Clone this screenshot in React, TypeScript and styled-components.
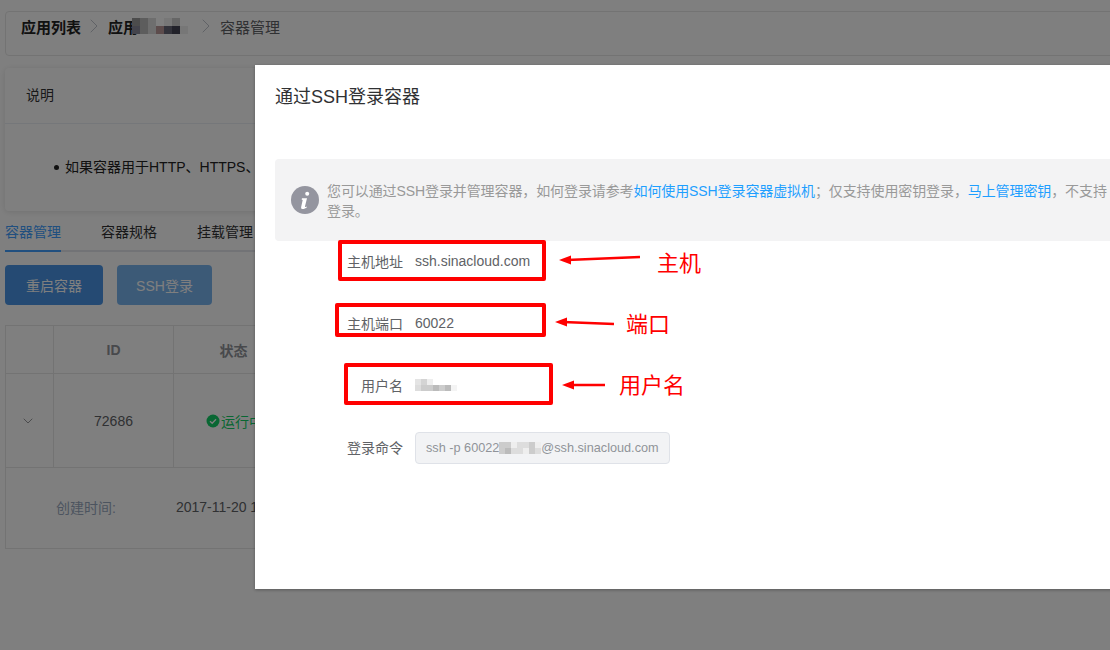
import React from "react";
import styled, { createGlobalStyle } from "styled-components";
import { ChevronDown, ChevronRight } from "lucide-react";

const GlobalStyle = createGlobalStyle`
  html, body {
    margin: 0;
    padding: 0;
    background: #fff;
  }
  * {
    box-sizing: border-box;
  }
`;

const Screen = styled.div`
  position: relative;
  width: 1110px;
  height: 650px;
  overflow: hidden;
  font-family: "Liberation Sans", "Noto Sans CJK SC", sans-serif;
  font-size: 14px;
  color: #333;
`;

const Page = styled.div`
  display: flex;
  flex-direction: column;
  width: 1400px;
  padding: 11px 0 0 5px;
`;

const Breadcrumb = styled.div`
  height: 45px;
  padding: 3px 0 0 15px;
  border: 1px solid #e6e6e6;
  border-radius: 4px;
  color: #666;
`;

const Trail = styled.div`
  display: flex;
  align-items: center;
  height: 22px;
  font-size: 15px;
`;

const Crumb = styled.span<{ $strong?: boolean }>`
  font-weight: ${(p) => (p.$strong ? 700 : 400)};
  color: ${(p) => (p.$strong ? "#222" : "#606266")};
`;

const Sep = styled(ChevronRight)`
  width: 24px;
  height: 24px;
  margin: 0 2px 0 1px;
  color: #c0c4cc;
  flex: none;
`;

const Mosaic = styled.svg`
  display: inline-block;
  flex: none;
  vertical-align: middle;
`;

const CrumbBlur = styled.span`
  display: flex;
  margin: 0 5px 0 -6px;
`;

const Card = styled.div`
  margin-top: 12px;
  height: 143px;
  background: #fff;
  border-radius: 4px;
  box-shadow: 0 1px 6px rgba(0, 0, 0, 0.12);
`;

const CardHead = styled.div`
  height: 56px;
  padding: 0 21px 3px;
  display: flex;
  align-items: center;
  font-size: 14px;
  color: #333;
  border-bottom: 1px solid #ebeef5;
`;

const CardBody = styled.ul`
  margin: 0;
  padding: 35px 0 0 49px;
  list-style: none;
  font-size: 14px;
  line-height: 16px;
  color: #222;
`;

const CardItem = styled.li`
  display: flex;
  align-items: center;
  white-space: nowrap;

  &::before {
    content: "";
    width: 5px;
    height: 5px;
    margin-right: 6px;
    border-radius: 50%;
    background: #222;
  }
`;

const Tabs = styled.div`
  display: flex;
  gap: 40px;
  height: 41px;
  border-bottom: 2px solid #e4e7ed;
  width: 1000px;
`;

const Tab = styled.div<{ $active?: boolean }>`
  height: 41px;
  line-height: 42px;
  font-size: 14px;
  color: ${(p) => (p.$active ? "#409eff" : "#303133")};
  border-bottom: 2px solid ${(p) => (p.$active ? "#409eff" : "transparent")};
`;

const Actions = styled.div`
  display: flex;
  gap: 14px;
  margin-top: 13px;
`;

const Button = styled.button<{ $muted?: boolean }>`
  height: 40px;
  width: ${(p) => (p.$muted ? "95px" : "98px")};
  padding: 0;
  border: 0;
  border-radius: 4px;
  font: inherit;
  font-size: 14px;
  color: #fff;
  background: ${(p) => (p.$muted ? "#79b4ee" : "#4a95e6")};
`;

const Table = styled.div`
  margin-top: 20px;
  width: 1000px;
  border: 1px solid #e6e6e6;
  height: 224px;
`;

const TableRow = styled.div<{ $h: number }>`
  display: grid;
  grid-template-columns: 48px 120px 120px 1fr;
  height: ${(p) => p.$h}px;
  border-bottom: 1px solid #e6e6e6;
`;

const Cell = styled.div<{ $head?: boolean }>`
  display: flex;
  align-items: center;
  justify-content: center;
  border-right: 1px solid #e6e6e6;
  font-size: 14px;
  font-weight: ${(p) => (p.$head ? 700 : 400)};
  color: ${(p) => (p.$head ? "#909399" : "#606266")};
`;

const ExpandCell = styled(Cell)`
  padding-right: 4px;
`;

const StatusCell = styled(Cell)`
  justify-content: flex-start;
  padding-left: 32px;
  color: #13ce66;
  gap: 1px;
  white-space: nowrap;
`;

const Expanded = styled.div`
  display: flex;
  align-items: center;
  height: 77px;
  padding-left: 50px;
  gap: 60px;
  color: #606266;
`;

const ExpandedLabel = styled.span`
  color: #99a9bf;
`;

const Backdrop = styled.div`
  position: absolute;
  inset: 0;
  background: rgba(0, 0, 0, 0.5);
`;

const Dialog = styled.div`
  position: absolute;
  left: 255px;
  top: 65px;
  width: 900px;
  height: 524px;
  background: #fff;
  box-shadow: 0 1px 3px rgba(0, 0, 0, 0.3);
  padding: 20px;
`;

const DialogTitle = styled.div`
  font-size: 18px;
  line-height: 24px;
  color: #303133;
`;

const Alert = styled.div`
  display: flex;
  align-items: center;
  gap: 8px;
  margin-top: 50px;
  height: 82px;
  padding: 0 16px;
  background: #f3f3f4;
  border-radius: 4px;
`;

const AlertIcon = styled.svg`
  flex: none;
  width: 28px;
  height: 28px;
`;

const AlertText = styled.div`
  padding-top: 1px;
  font-size: 14px;
  line-height: 20px;
  letter-spacing: -0.1px;
  color: #999;
  white-space: nowrap;
`;

const AlertLink = styled.span`
  color: #1e9fff;
`;

const Form = styled.div`
  display: flex;
  flex-direction: column;
  gap: 22px;
`;

const FormRow = styled.div`
  display: flex;
  align-items: center;
  height: 40px;
  font-size: 14px;
  color: #606266;
`;

const Label = styled.div`
  width: 128px;
  flex: none;
  padding-bottom: 1px;
  text-align: right;
`;

const Value = styled.div`
  display: flex;
  margin-left: 12px;
  white-space: nowrap;
`;

const Command = styled.div`
  display: flex;
  align-items: center;
  margin: 1px 0 0 12px;
  width: 255px;
  height: 32px;
  padding: 0 10px;
  font-size: 12.7px;
  color: #909399;
  background: #f2f3f5;
  border: 1px solid #dfe2e8;
  border-radius: 4px;
  white-space: nowrap;
`;

const RedBox = styled.div<{ $x: number; $y: number; $w: number; $h: number }>`
  position: absolute;
  left: ${(p) => p.$x}px;
  top: ${(p) => p.$y}px;
  width: ${(p) => p.$w}px;
  height: ${(p) => p.$h}px;
  border: 4px solid #ff0000;
  border-radius: 2px;
`;

const RedNote = styled.div<{ $x: number; $y: number }>`
  position: absolute;
  left: ${(p) => p.$x}px;
  top: ${(p) => p.$y}px;
  font-family: "Noto Sans CJK SC", sans-serif;
  font-size: 22px;
  line-height: 28px;
  color: #ff0000;
  white-space: nowrap;
`;

const Arrow = styled.svg<{ $x: number; $y: number }>`
  position: absolute;
  left: ${(p) => p.$x}px;
  top: ${(p) => p.$y}px;
`;

const BlurBlocks = ({ cells, size }: { cells: [number, number, string][]; size: number }) => {
  const w = Math.max(...cells.map((c) => c[0])) + 1;
  const h = Math.max(...cells.map((c) => c[1])) + 1;
  return (
    <Mosaic width={w * size} height={h * size} viewBox={`0 0 ${w * size} ${h * size}`}>
      {cells.map(([x, y, fill], i) => (
        <rect key={i} x={x * size} y={y * size} width={size} height={size} fill={fill} />
      ))}
    </Mosaic>
  );
};

const crumbBlur: [number, number, string][] = [
  [0, 0, "#999"], [1, 0, "#bbb"], [2, 0, "#ddd"], [3, 0, "#fff"], [4, 0, "#eee"], [5, 0, "#ccc"], [6, 0, "#fff"],
  [0, 1, "#889"], [1, 1, "#bbb"], [2, 1, "#ddd"], [3, 1, "#b99"], [4, 1, "#667"], [5, 1, "#445"], [6, 1, "#eee"],
];

const userBlur: [number, number, string][] = [
  [0, 0, "#e4e4e4"], [1, 0, "#d4d4d4"], [2, 0, "#eee"], [3, 0, "#fff"], [4, 0, "#fff"], [5, 0, "#fff"], [6, 0, "#fff"],
  [0, 1, "#ddd"], [1, 1, "#ccc"], [2, 1, "#ccc"], [3, 1, "#bbb"], [4, 1, "#ccc"], [5, 1, "#bbb"], [6, 1, "#f4f4f4"],
];

const cmdBlur: [number, number, string][] = [
  [0, 0, "#ccc"], [1, 0, "#ccc"], [2, 0, "#eee"], [3, 0, "#ddd"], [4, 0, "#ddd"], [5, 0, "#ccc"], [6, 0, "#eee"],
  [0, 1, "#ccc"], [1, 1, "#bbb"], [2, 1, "#ddd"], [3, 1, "#ddd"], [4, 1, "#eee"], [5, 1, "#ccc"], [6, 1, "#ddd"],
];

const LeftArrow = ({ x, y, w, tilt }: { x: number; y: number; w: number; tilt: number }) => (
  <Arrow $x={x} $y={y} width={w} height={14} viewBox={`0 0 ${w} 14`}>
    <line x1={8} y1={7} x2={w} y2={7 - tilt} stroke="#f00" strokeWidth={2.5} />
    <polygon points="0,7 12,2.500 12,11.500" fill="#f00" />
  </Arrow>
);

const App = () => {
  return (
    <Screen>
      <GlobalStyle />
      <Page>
        <Breadcrumb>
          <Trail>
            <Crumb $strong>应用列表</Crumb>
            <Sep strokeWidth={1} />
            <Crumb $strong>应用</Crumb>
            <CrumbBlur>
              <BlurBlocks cells={crumbBlur} size={8} />
            </CrumbBlur>
            <Sep strokeWidth={1} />
            <Crumb>容器管理</Crumb>
          </Trail>
        </Breadcrumb>
        <Card>
          <CardHead>说明</CardHead>
          <CardBody>
            <CardItem>如果容器用于HTTP、HTTPS、TCP服务</CardItem>
          </CardBody>
        </Card>
        <Tabs>
          <Tab $active>容器管理</Tab>
          <Tab>容器规格</Tab>
          <Tab>挂载管理</Tab>
        </Tabs>
        <Actions>
          <Button>重启容器</Button>
          <Button $muted>SSH登录</Button>
        </Actions>
        <Table>
          <TableRow $h={48}>
            <Cell $head />
            <Cell $head>ID</Cell>
            <Cell $head>状态</Cell>
            <Cell $head />
          </TableRow>
          <TableRow $h={94}>
            <ExpandCell>
              <ChevronDown size={16} strokeWidth={1} color="#606266" />
            </ExpandCell>
            <Cell>72686</Cell>
            <StatusCell>
              <svg width="14" height="14" viewBox="0 0 14 14">
                <circle cx="7" cy="7" r="6.5" fill="#13ce66" />
                <path d="M4 7.2l2.2 2.1L10 5.2" fill="none" stroke="#fff" strokeWidth="1.3" />
              </svg>
              运行中
            </StatusCell>
            <Cell />
          </TableRow>
          <Expanded>
            <ExpandedLabel>创建时间:</ExpandedLabel>
            <span>2017-11-20 10:00:00</span>
          </Expanded>
        </Table>
      </Page>
      <Backdrop />
      <Dialog>
        <DialogTitle>通过SSH登录容器</DialogTitle>
        <Alert>
          <AlertIcon viewBox="0 0 28 28">
            <circle cx="14" cy="14" r="14" fill="#94959f" />
            <circle cx="16.2" cy="7.8" r="2" fill="#fff" />
            <path d="M11 12.2h5l-2 8c-.2.9.5 1 1.900.2l.2.7c-1.500 1.400-3 2-4.300 2-1.400 0-2-1-1.600-2.400l1.500-6.600-1.100-.5z" fill="#fff" />
          </AlertIcon>
          <AlertText>
            您可以通过SSH登录并管理容器，如何登录请参考<AlertLink>如何使用SSH登录容器虚拟机</AlertLink>；仅支持使用密钥登录，<AlertLink>马上管理密钥</AlertLink>，不支持
            <br />
            登录。
          </AlertText>
        </Alert>
        <Form>
          <FormRow>
            <Label>主机地址</Label>
            <Value>ssh.sinacloud.com</Value>
          </FormRow>
          <FormRow>
            <Label>主机端口</Label>
            <Value>60022</Value>
          </FormRow>
          <FormRow>
            <Label>用户名</Label>
            <Value>
              <BlurBlocks cells={userBlur} size={6} />
            </Value>
          </FormRow>
          <FormRow>
            <Label>登录命令</Label>
            <Command>
              ssh -p 60022
              <BlurBlocks cells={cmdBlur} size={6} />
              @ssh.sinacloud.com
            </Command>
          </FormRow>
        </Form>
      </Dialog>
      <RedBox $x={338} $y={240} $w={208} $h={41} />
      <RedBox $x={335} $y={303} $w={211} $h={34} />
      <RedBox $x={344} $y={363} $w={209} $h={42} />
      <LeftArrow x={559} y={253} w={81} tilt={3} />
      <LeftArrow x={555} y={315} w={59} tilt={-2} />
      <LeftArrow x={562} y={378} w={43} tilt={0} />
      <RedNote $x={657} $y={247}>主机</RedNote>
      <RedNote $x={626} $y={308}>端口</RedNote>
      <RedNote $x={619} $y={369}>用户名</RedNote>
    </Screen>
  );
};

export default App;
